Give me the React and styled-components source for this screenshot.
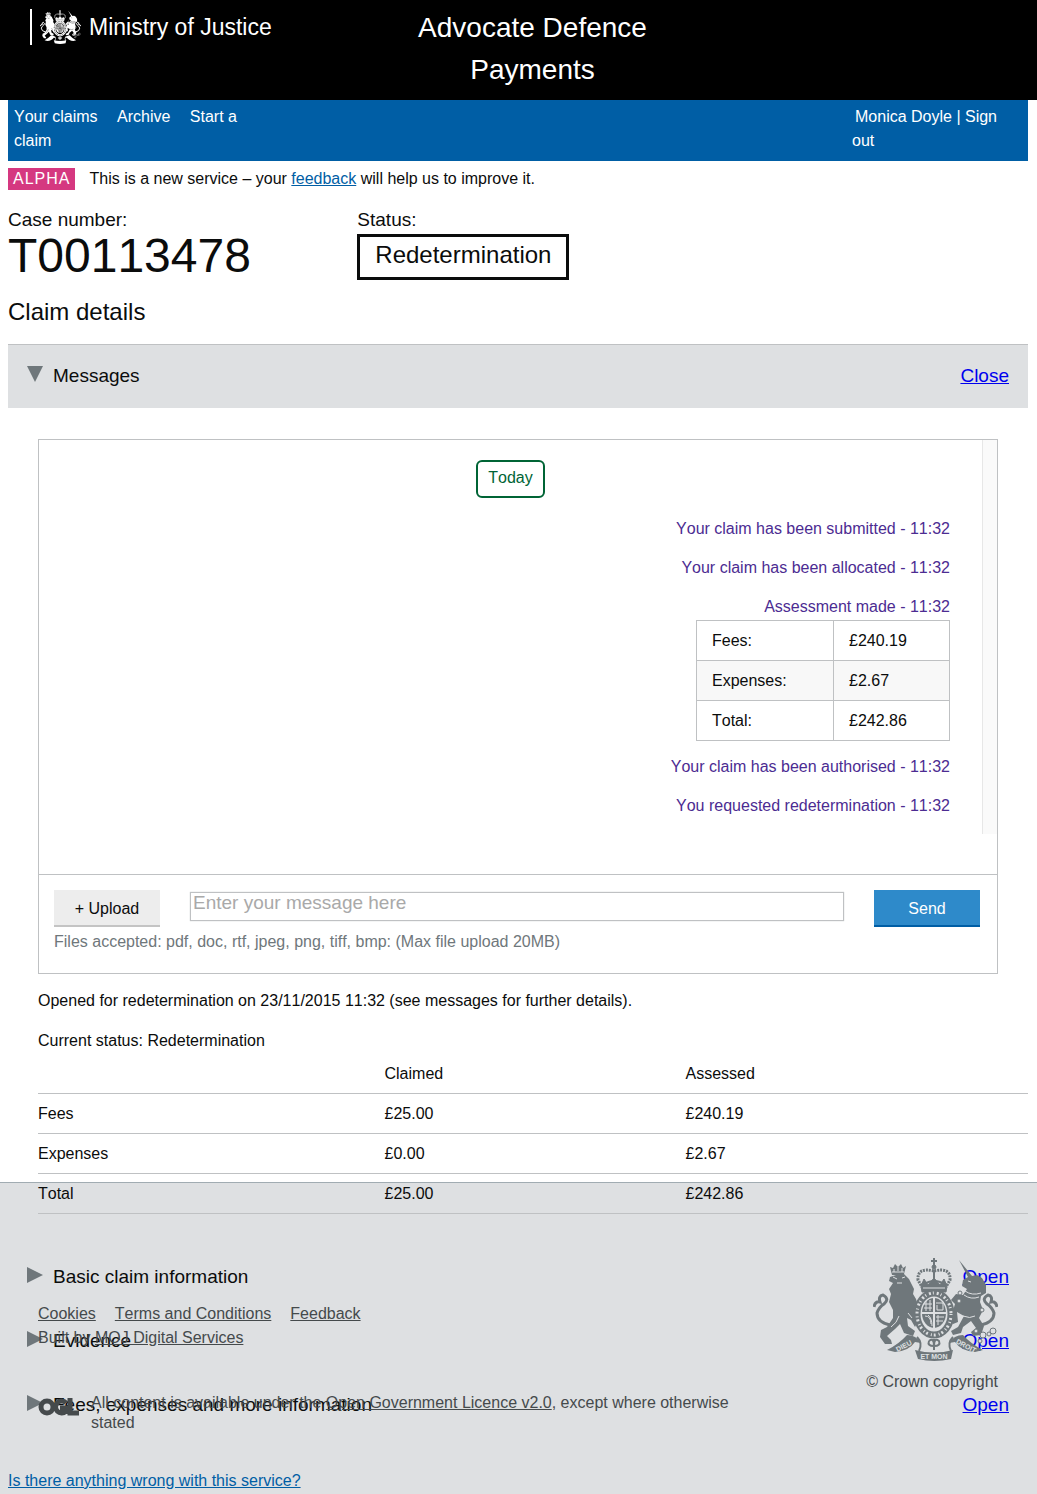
import React from 'react';
import styled, { createGlobalStyle } from 'styled-components';

const colors = {
  ink: '#0b0c0c',
  blue: '#005ea5',
  send: '#2e8aca',
  pink: '#d53880',
  purple: '#4c2c92',
  green: '#006435',
  line: '#bfc1c3',
  panel: '#dee0e2',
  muted: '#6f777b',
  footerText: '#454a4c',
};

const GlobalStyle = createGlobalStyle`
  *, *::before, *::after { box-sizing: border-box; }
  body {
    margin: 0;
    background: #fff;
    color: ${colors.ink};
    font: 16px/24px "Liberation Sans", Arial, Helvetica, sans-serif;
    font-kerning: none;
  }
  h1, h2, p, ul, figure { margin: 0; padding: 0; font-weight: 400; }
  ul { list-style: none; }
`;

const Header = styled.header`
  display: grid;
  grid-template-columns: repeat(3, 1fr);
  min-height: 100px;
  padding: 7px 0 9px 28px;
  background: #000;
  color: #fff;
`;

const Brand = styled.a`
  display: flex;
  align-items: center;
  justify-self: start;
  gap: 8px;
  height: 36px;
  margin: 2px;
  padding-left: 8px;
  border-left: 2px solid #fff;
  color: #fff;
  font-size: 23px;
  white-space: nowrap;
  text-decoration: none;
`;

const ServiceName = styled.h1`
  font-size: 28px;
  line-height: 42px;
  text-align: center;
`;

const Page = styled.main`
  padding: 0 9px 0 8px;
`;

const NavBar = styled.nav`
  display: flex;
  justify-content: space-between;
  padding: 5px 16px 8px 6px;
  background: ${colors.blue};
  color: #fff;
`;

const NavLinks = styled.div`
  width: 25%;
  a { margin-right: 15px; }
`;

const UserLinks = styled.div`
  width: 160px;
  a:first-child { margin-left: 3px; }
`;

const NavLink = styled.a`
  color: #fff;
  text-decoration: none;
`;

const PhaseBanner = styled.div`
  display: flex;
  align-items: center;
  gap: 14px;
  padding: 6px 0;
`;

const PhaseTag = styled.strong`
  padding: 0 5px;
  background: ${colors.pink};
  color: #fff;
  font-weight: 400;
  line-height: 22px;
  letter-spacing: 1px;
`;

const BlueLink = styled.a`
  color: ${colors.blue};
`;

const CaseSummary = styled.section`
  display: grid;
  grid-template-columns: repeat(3, 1fr);
  gap: 28px;
  padding-top: 11px;
`;

const SummaryLabel = styled.p`
  font-size: 19px;
  line-height: 24px;
`;

const CaseNumber = styled.p`
  font-size: 48px;
  line-height: 48px;
`;

const StatusBox = styled.p`
  display: inline-block;
  margin-top: 2px;
  padding: 3px 15px 7px;
  border: 3px solid ${colors.ink};
  font-size: 24px;
  line-height: 30px;
`;

const SectionTitle = styled.h2`
  padding: 17px 0;
  font-size: 24px;
  line-height: 30px;
`;

const AccordionBar = styled.div`
  display: flex;
  align-items: center;
  gap: 10px;
  height: 64px;
  padding: 0 19px 2px;
  border-top: 1px solid ${colors.line};
  background: ${colors.panel};
  font-size: 19px;
`;

const AccordionTitle = styled.h2`
  flex: 1;
  font-size: 19px;
`;

const ToggleLink = styled.a`
  color: #0000ee;
`;

const Arrow = styled.svg`
  width: 16px;
  height: 16px;
  margin-bottom: 4px;
  fill: ${colors.muted};
`;

const MessagePanel = styled.section`
  margin: 31px 30px 0;
  border: 1px solid ${colors.line};
`;

const MessageScroller = styled.div`
  display: flex;
  margin-bottom: 40px;
`;

const ScrollTrack = styled.div`
  width: 15px;
  border-left: 1px solid #e7e7e7;
  background: #fafafa;
`;

const MessageList = styled.div`
  display: flex;
  flex: 1;
  flex-direction: column;
  align-items: flex-end;
  gap: 15px;
  padding: 20px 32px 16px 0;
`;

const DayMarker = styled.p`
  align-self: center;
  margin: 0 -32px 4px 0;
  padding: 4px 10px 6px;
  border: 2px solid ${colors.green};
  border-radius: 6px;
  color: ${colors.green};
`;

const Message = styled.div`
  color: ${colors.purple};
  text-align: right;
`;

const AssessmentTable = styled.table`
  width: 254px;
  margin: 1px 0 -1px;
  border-collapse: collapse;
  color: ${colors.ink};
  text-align: left;
  tr:nth-child(even) { background: #f8f8f8; }
  th, td {
    height: 40px;
    padding: 0 15px;
    border: 1px solid ${colors.line};
    font-weight: 400;
  }
  th { width: 137px; }
`;

const MessageForm = styled.form`
  padding: 15px 17px 19px 15px;
  border-top: 1px solid ${colors.line};
`;

const FormRow = styled.div`
  display: flex;
  align-items: flex-start;
  gap: 30px;
`;

const FormButton = styled.button`
  width: 106px;
  height: 37px;
  padding: 2px 0 0;
  border: 0;
  border-bottom: 2px solid ${({ $primary }) => ($primary ? colors.blue : '#c4c4c4')};
  border-radius: 0;
  background: ${({ $primary }) => ($primary ? colors.send : '#ededed')};
  color: ${({ $primary }) => ($primary ? '#fff' : colors.ink)};
  font: inherit;
`;

const MessageInput = styled.textarea`
  flex: 1;
  min-width: 0;
  height: 29px;
  margin-top: 2px;
  padding: 0 2px;
  border: 1px solid ${colors.line};
  border-radius: 0;
  box-shadow: 0 0 1px ${colors.line};
  color: ${colors.ink};
  font: inherit;
  font-size: 19px;
  line-height: 20px;
  overflow: hidden;
  resize: none;
  &::placeholder { color: #a9a9a9; }
`;

const Hint = styled.p`
  padding-top: 3px;
  color: ${colors.muted};
`;

const Notes = styled.div`
  display: grid;
  gap: 16px;
  padding: 15px 0 0 30px;
`;

const ClaimTable = styled.table`
  position: relative;
  width: calc(100% - 30px);
  margin: 0 0 32px 30px;
  border-collapse: collapse;
  table-layout: fixed;
  text-align: left;
  th, td {
    height: 40px;
    padding: 2px 0 0;
    border-bottom: 1px solid ${colors.line};
    font-weight: 400;
  }
`;

const NameColumn = styled.col`
  width: 35%;
`;

const ClaimedColumn = styled.col`
  width: 301px;
`;

/* The footer rides up over the collapsed sections of the claim. */
const Footer = styled.footer`
  margin-top: -256px;
  padding: 75px 39px 0 38px;
  border-top: 1px solid #a1acb2;
  background: ${colors.panel};
  color: ${colors.footerText};
  a { color: inherit; }
`;

const FooterRow = styled.div`
  display: flex;
  justify-content: space-between;
`;

const FooterMeta = styled.div`
  max-width: 710px;
  padding-top: 44px;
`;

const FooterLinks = styled.ul`
  display: flex;
  gap: 19px;
`;

const Licence = styled.div`
  display: flex;
  gap: 12px;
  padding-top: 43px;
  line-height: 20px;
`;

const OglLogo = styled.svg`
  flex: none;
  width: 41px;
  height: 18px;
  margin-top: 5px;
`;

const Copyright = styled.figure`
  display: flex;
  flex-direction: column;
  align-items: flex-end;
  gap: 9px;
`;

const Feedback = styled.div`
  margin: 36px -30px 0;
  padding-bottom: 1px;
  a { color: ${colors.blue}; }
`;

function Crest({ width, height, color, ground, small }) {
  return (
    <svg width={width} height={height} viewBox="0 0 125 103" aria-hidden="true">
      <g fill={color} stroke="none">
        {/* lion */}
        <path d="M19 17 L17 9 L20 10 L22 6 L25 9 L28 6 L30 10 L33 8 L31 16 L36 21 L39 27 L41 31 L40 36 L43 41 L45 48 L41 53 L46 61 L42 69 L38 62 L34 60 L35 68 L42 73 L40 78 L31 75 L27 66 L22 71 L14 78 L18 82 L19 86 L12 86 L7 79 L8 72 L14 69 L20 60 L20 52 L16 44 L18 36 L16 31 L20 25 L16 23 L17 19 L23 17 Z" />
        {/* unicorn */}
        <path d="M86 2 L99 18 L104 17 L109 20 L113 27 L113 35 L108 38 L107 44 L110 52 L106 60 L111 68 L108 77 L100 78 L98 74 L103 70 L98 63 L90 69 L88 75 L80 77 L78 73 L85 69 L91 58 L84 54 L85 64 L80 66 L79 56 L82 46 L78 42 L83 36 L90 37 L94 31 L89 28 L90 22 L95 19 Z" />
        {/* tails */}
        <path fill="none" stroke={color} strokeWidth="3" d="M17 67 Q4 64 4 55 Q6 49 11 46 Q17 41 10 37 Q5 38 7 44 Q2 43 1 49" />
        <path fill="none" stroke={color} strokeWidth="3" d="M108 67 Q121 64 121 55 Q119 49 114 46 Q108 41 115 37 Q120 38 118 44 Q123 43 124 49" />
        {/* ribbon */}
        <path d="M14 92 Q26 86 34 77 Q43 77 48 85 L42 84 Q36 93 22 94 Z M110 92 Q98 86 90 77 Q81 77 76 85 L82 84 Q88 93 102 94 Z M42 92 Q61 97 80 92 L78 101 Q61 105 45 101 Z" />
      </g>
      <path d="M44 79 Q50 85 46 93 M80 79 Q74 85 78 93" stroke={color} strokeWidth="2" fill="none" />
      {/* royal crown */}
      <g fill="none" stroke={color}>
        <path strokeWidth="3" strokeDasharray="2 1" d="M61 13 Q44 9 45 22 L49 29 M61 13 Q78 9 77 22 L73 29" />
        <path strokeWidth="2" d="M61 13 V28 M50 27 Q61 19 73 27 M61 0 V8 M58 3 H64" />
        <circle cx="61" cy="9" r="2" fill={color} />
        <path fill={color} d="M48 28 L51 21 L55 27 L61 20 L67 27 L71 21 L74 28 L73 34 H49 Z" />
        <path stroke={ground} strokeWidth="1" d="M50 30 H72" />
      </g>
      {/* garter and quartered shield */}
      <ellipse cx="61" cy="56" rx="17" ry="21" fill={ground} stroke={color} strokeWidth="7" />
      <ellipse cx="61" cy="56" rx="17" ry="21" fill="none" stroke={ground} strokeWidth="3" strokeDasharray="1 3 2 2" />
      <ellipse cx="61" cy="55" rx="12" ry="15" fill={color} />
      <g stroke={ground} strokeWidth="1" fill="none">
        <path strokeWidth="2" d="M61 40 V70 M49 55 H73" />
        <path d="M51 46 H59 M51 50 H59 M53 43 V53 M57 42 V53 M63 45 H70 V52 H64 V47 M52 58 Q58 58 58 66 M55 57 Q59 60 59 68 M63 59 H71 M63 63 H70 M65 57 V67" />
      </g>
      <path d="M56 83 Q61 79 61 88 Q61 79 66 83 Q68 88 61 88 Q54 88 56 83 M61 81 V92" fill="none" stroke={color} strokeWidth="2" />
      {/* mane, collar and muscle lines */}
      <g fill="none" stroke={ground} strokeWidth="1">
        <path d="M19 14 H31 M20 19 L24 21 M29 20 L32 19 M24 25 H29 M21 11 V14 M25 9 V13 M29 10 V14 M35 55 L39 60 M26 58 Q24 65 18 69" />
        <path d="M91 37 Q98 42 106 39 M92 33 Q99 38 108 35 M95 23 L98 24 M90 58 Q97 61 102 58" />
      </g>
      <g fill={ground} stroke={color} strokeWidth="1">
        <circle cx="87" cy="35" r="2" /><circle cx="86" cy="43" r="2" /><circle cx="109" cy="52" r="2" />
        <circle cx="103" cy="73" r="2" /><circle cx="110" cy="77" r="3" /><circle cx="116" cy="76" r="2" />
        <circle cx="120" cy="73" r="3" /><circle cx="107" cy="83" r="2" />
      </g>
      {!small && (
        <g fill={ground} fontFamily="Liberation Sans, Arial, sans-serif" fontWeight="700" fontSize="7" textAnchor="middle">
          <text x="61" y="101">ET MON</text>
          <text transform="translate(32 90) rotate(-28)">DIEU</text>
          <text transform="translate(92 90) rotate(28)">DROIT</text>
        </g>
      )}
    </svg>
  );
}

const messages = [
  { text: 'Your claim has been submitted - 11:32' },
  { text: 'Your claim has been allocated - 11:32' },
  {
    text: 'Assessment made - 11:32',
    rows: [['Fees:', '£240.19'], ['Expenses:', '£2.67'], ['Total:', '£242.86']],
  },
  { text: 'Your claim has been authorised - 11:32' },
  { text: 'You requested redetermination - 11:32' },
];

const claimRows = [
  ['Fees', '£25.00', '£240.19'],
  ['Expenses', '£0.00', '£2.67'],
  ['Total', '£25.00', '£242.86'],
];

function Accordion({ title, open }) {
  return (
    <AccordionBar>
      <Arrow viewBox="0 0 16 16" aria-hidden="true">
        <path d={open ? 'M0 0H16L8 16Z' : 'M0 0L16 8L0 16Z'} />
      </Arrow>
      <AccordionTitle>{title}</AccordionTitle>
      <ToggleLink href="#">{open ? 'Close' : 'Open'}</ToggleLink>
    </AccordionBar>
  );
}

export default function App() {
  return (
    <>
      <GlobalStyle />
      <Header>
        <Brand href="#">
          <Crest width={41} height={36} color="#fff" ground="#000" small />
          Ministry of Justice
        </Brand>
        <ServiceName>Advocate Defence Payments</ServiceName>
      </Header>

      <Page>
        <NavBar>
          <NavLinks>
            <NavLink href="#">Your claims</NavLink> <NavLink href="#">Archive</NavLink>{' '}
            <NavLink href="#">Start a claim</NavLink>
          </NavLinks>
          <UserLinks>
            <NavLink href="#">Monica Doyle</NavLink> | <NavLink href="#">Sign out</NavLink>
          </UserLinks>
        </NavBar>

        <PhaseBanner>
          <PhaseTag>ALPHA</PhaseTag>
          <p>
            This is a new service – your <BlueLink href="#">feedback</BlueLink> will help us to improve it.
          </p>
        </PhaseBanner>

        <CaseSummary>
          <div>
            <SummaryLabel>Case number:</SummaryLabel>
            <CaseNumber>T00113478</CaseNumber>
          </div>
          <div>
            <SummaryLabel>Status:</SummaryLabel>
            <StatusBox>Redetermination</StatusBox>
          </div>
        </CaseSummary>

        <SectionTitle>Claim details</SectionTitle>

        <Accordion title="Messages" open />
        <MessagePanel>
          <MessageScroller>
            <MessageList>
              <DayMarker>Today</DayMarker>
              {messages.map(({ text, rows }) => (
                <Message key={text}>
                  {text}
                  {rows && (
                    <AssessmentTable>
                      <tbody>
                        {rows.map(([name, amount]) => (
                          <tr key={name}>
                            <th scope="row">{name}</th>
                            <td>{amount}</td>
                          </tr>
                        ))}
                      </tbody>
                    </AssessmentTable>
                  )}
                </Message>
              ))}
            </MessageList>
            <ScrollTrack />
          </MessageScroller>
          <MessageForm>
            <FormRow>
              <FormButton type="button">+ Upload</FormButton>
              <MessageInput aria-label="Message" placeholder="Enter your message here" rows={1} />
              <FormButton type="button" $primary>Send</FormButton>
            </FormRow>
            <Hint>Files accepted: pdf, doc, rtf, jpeg, png, tiff, bmp: (Max file upload 20MB)</Hint>
          </MessageForm>
        </MessagePanel>

        <Notes>
          <p>Opened for redetermination on 23/11/2015 11:32 (see messages for further details).</p>
          <p>Current status: Redetermination</p>
        </Notes>
        <ClaimTable>
          <colgroup>
            <NameColumn />
            <ClaimedColumn />
            <col />
          </colgroup>
          <thead>
            <tr>
              <td />
              <th scope="col">Claimed</th>
              <th scope="col">Assessed</th>
            </tr>
          </thead>
          <tbody>
            {claimRows.map(([name, claimed, assessed]) => (
              <tr key={name}>
                <th scope="row">{name}</th>
                <td>{claimed}</td>
                <td>{assessed}</td>
              </tr>
            ))}
          </tbody>
        </ClaimTable>

        <Accordion title="Basic claim information" />
        <Accordion title="Evidence" />
        <Accordion title="Fees, expenses and more information" />
      </Page>

      <Footer>
        <FooterRow>
          <FooterMeta>
            <FooterLinks>
              <li><a href="#">Cookies</a></li>
              <li><a href="#">Terms and Conditions</a></li>
              <li><a href="#">Feedback</a></li>
            </FooterLinks>
            <p>Built by <a href="#">MOJ Digital Services</a></p>
            <Licence>
              <OglLogo viewBox="0 0 41 18" fill="none" stroke={colors.footerText} strokeWidth="5" aria-hidden="true">
                <circle cx="9" cy="9" r="6" />
                <path d="M28 5A6 6 0 1 0 28 13V10H22M32 0V15H41" />
              </OglLogo>
              <p>
                All content is available under the <a href="#">Open Government Licence v2.0</a>, except where otherwise
                stated
              </p>
            </Licence>
          </FooterMeta>
          <Copyright>
            <Crest width={125} height={103} color={colors.muted} ground={colors.panel} />
            <figcaption>© Crown copyright</figcaption>
          </Copyright>
        </FooterRow>
        <Feedback>
          <a href="#">Is there anything wrong with this service?</a>
        </Feedback>
      </Footer>
    </>
  );
}
